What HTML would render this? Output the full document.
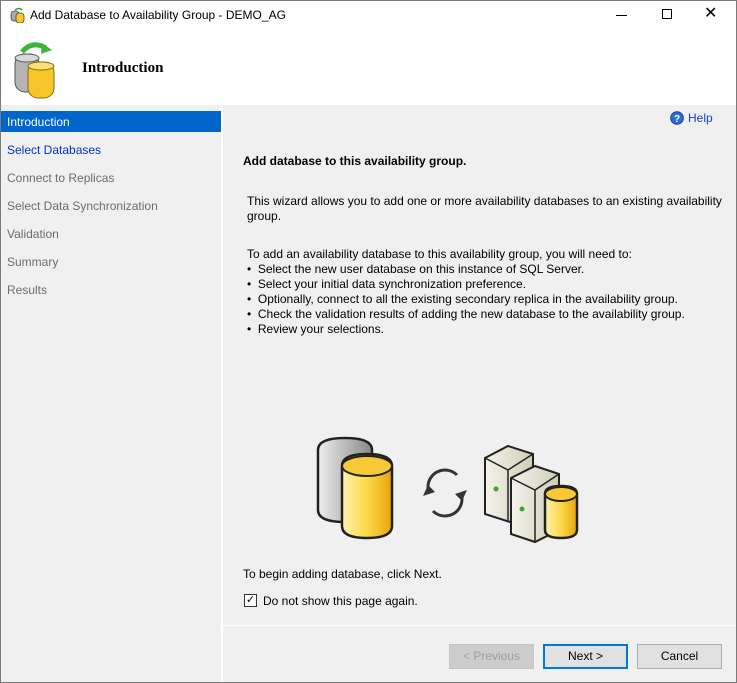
<!DOCTYPE html>
<html><head><meta charset="utf-8"><style>
*{margin:0;padding:0;box-sizing:border-box}
body{width:737px;height:683px;overflow:hidden;font-family:"Liberation Sans",sans-serif;font-size:12px;color:#000;background:#fff}
.win{position:absolute;left:0;top:0;width:737px;height:683px;border:1px solid #7a7a7a;background:#fff}
.a{position:absolute;white-space:nowrap}
.nav{position:absolute;left:0;top:104px;width:220px;height:577px;background:#f0f0f0}
.main{position:absolute;left:222px;top:104px;width:513px;height:577px;background:#f0f0f0}
.ni{position:absolute;left:6px;color:#6d6d6d;font-size:12px}
.btn{position:absolute;top:643px;height:25px;border:1px solid #adadad;background:#e1e1e1;text-align:center;line-height:23px;font-size:12px}
p.t{font-size:12px;line-height:15px}
</style></head><body><div class="win">
<svg class="a" style="left:9px;top:6px" width="16" height="16" viewBox="0 0 16 16"><rect x="1" y="4" width="8" height="10" rx="3" fill="#aaa" stroke="#444" stroke-width=".8"/><rect x="6" y="6" width="8" height="10" rx="3" fill="#f6c82a" stroke="#444" stroke-width=".8"/><path d="M5 3 Q9 0 12 3" stroke="#3a3" stroke-width="1.5" fill="none"/></svg>
<div class="a" style="left:29px;top:7px;font-size:12px">Add Database to Availability Group - DEMO_AG</div>
<div class="a" style="left:615px;top:14px;width:11px;height:1px;background:#000"></div>
<div class="a" style="left:661px;top:8px;width:10px;height:10px;border:1px solid #000"></div>
<div class="a" style="left:703px;top:2px;font-size:16px">✕</div>
<svg class="a" style="left:11px;top:39px" width="50" height="60" viewBox="0 0 50 60">
<path d="M10 12 Q20 0 34 8" stroke="#3cb43c" stroke-width="5" fill="none"/><path d="M30 3 L40 10 L29 14Z" fill="#3cb43c"/>
<rect x="3" y="14" width="24" height="38" rx="10" fill="#b4b4b4" stroke="#555"/><ellipse cx="15" cy="18" rx="12" ry="4" fill="#d8d8d8" stroke="#555"/>
<rect x="16" y="22" width="26" height="36" rx="10" fill="#f5c52a" stroke="#8a6a00"/><ellipse cx="29" cy="26" rx="13" ry="4" fill="#fbe07a" stroke="#8a6a00"/></svg>
<div class="a" style="left:81px;top:59px;font-family:'Liberation Serif',serif;font-weight:bold;font-size:15px">Introduction</div>
<div class="nav"></div>
<div class="main"></div>
<div class="a" style="left:0;top:110px;width:220px;height:21px;background:#0066cc"></div>
<div class="ni" style="top:114px;color:#fff">Introduction</div>
<div class="ni" style="top:142px;color:#0033cc">Select Databases</div>
<div class="ni" style="top:170px">Connect to Replicas</div>
<div class="ni" style="top:198px">Select Data Synchronization</div>
<div class="ni" style="top:226px">Validation</div>
<div class="ni" style="top:254px">Summary</div>
<div class="ni" style="top:282px">Results</div>
<svg class="a" style="left:669px;top:110px" width="14" height="14" viewBox="0 0 14 14"><circle cx="7" cy="7" r="6.3" fill="#2a6fd6" stroke="#0b3e94"/><text x="7" y="11" font-size="10" font-weight="bold" fill="#fff" text-anchor="middle" font-family="Liberation Sans">?</text></svg>
<div class="a" style="left:687px;top:110px;color:#1a3ccc">Help</div>
<div class="a" style="left:242px;top:153px;font-weight:bold">Add database to this availability group.</div>
<p class="a t" style="left:246px;top:193px;white-space:normal;width:485px">This wizard allows you to add one or more availability databases to an existing availability group.</p>
<p class="a t" style="left:246px;top:246px">To add an availability database to this availability group, you will need to:<br>•&nbsp; Select the new user database on this instance of SQL Server.<br>•&nbsp; Select your initial data synchronization preference.<br>•&nbsp; Optionally, connect to all the existing secondary replica in the availability group.<br>•&nbsp; Check the validation results of adding the new database to the availability group.<br>•&nbsp; Review your selections.</p>
<svg class="a" style="left:294px;top:429px" width="300" height="115" viewBox="0 0 300 115">
<defs><linearGradient id="g" x1="0" x2="1"><stop offset="0" stop-color="#eee"/><stop offset=".5" stop-color="#bbb"/><stop offset="1" stop-color="#888"/></linearGradient>
<linearGradient id="y" x1="0" x2="1"><stop offset="0" stop-color="#fff3b0"/><stop offset=".5" stop-color="#fcd848"/><stop offset="1" stop-color="#e6a50c"/></linearGradient>
<linearGradient id="s" x1="0" x2="1"><stop offset="0" stop-color="#f4f3ea"/><stop offset="1" stop-color="#cfccb8"/></linearGradient></defs>
<path d="M23 20 Q23 8 50 8 Q77 8 77 20 V80 Q77 92 50 92 Q23 92 23 80Z" fill="url(#g)" stroke="#222" stroke-width="2.5"/>
<path d="M47 36 Q47 24 72 24 Q97 24 97 36 V96 Q97 108 72 108 Q47 108 47 96Z" fill="url(#y)" stroke="#222" stroke-width="2.5"/>
<ellipse cx="72" cy="36" rx="25" ry="10" fill="#f8c935" stroke="#222" stroke-width="2"/>
<path d="M133 58 A17 17 0 0 1 162 45" stroke="#333" stroke-width="3" fill="none"/><path d="M133 55 L128 66 L140 62Z" fill="#333"/>
<path d="M167 68 A17 17 0 0 1 138 81" stroke="#333" stroke-width="3" fill="none"/><path d="M167 71 L172 60 L160 64Z" fill="#333"/>
<path d="M190 28 L213 16 L238 24 L238 80 L215 92 L190 84Z" fill="url(#s)" stroke="#222" stroke-width="2"/>
<path d="M190 28 L213 40 L238 24 M213 40 V92" stroke="#222" stroke-width="1.5" fill="none"/>
<path d="M216 48 L240 36 L264 44 L264 100 L240 112 L216 104Z" fill="url(#s)" stroke="#222" stroke-width="2"/>
<path d="M216 48 L240 60 L264 44 M240 60 V112" stroke="#222" stroke-width="1.5" fill="none"/>
<circle cx="201" cy="59" r="2.5" fill="#3a3"/><circle cx="227" cy="79" r="2.5" fill="#3a3"/>
<path d="M250 64 Q250 56 266 56 Q282 56 282 64 V100 Q282 108 266 108 Q250 108 250 100Z" fill="url(#y)" stroke="#222" stroke-width="2.5"/>
<ellipse cx="266" cy="64" rx="16" ry="7" fill="#f8c935" stroke="#222" stroke-width="2"/>
</svg>
<div class="a" style="left:242px;top:566px">To begin adding database, click Next.</div>
<div class="a" style="left:243px;top:593px;width:13px;height:13px;border:1px solid #333;background:#fff;font-size:11px;line-height:11px;text-align:center">✓</div>
<div class="a" style="left:262px;top:593px">Do not show this page again.</div>
<div class="a" style="left:222px;top:624px;width:513px;height:1px;background:#fff"></div>
<div class="btn" style="left:448px;width:85px;color:#a0a0a0;border-color:#c4c4c4;background:#cccccc">&lt; Previous</div>
<div class="btn" style="left:542px;width:85px;border:2px solid #0078d7;line-height:21px">Next &gt;</div>
<div class="btn" style="left:636px;width:85px">Cancel</div>
</div></body></html>
